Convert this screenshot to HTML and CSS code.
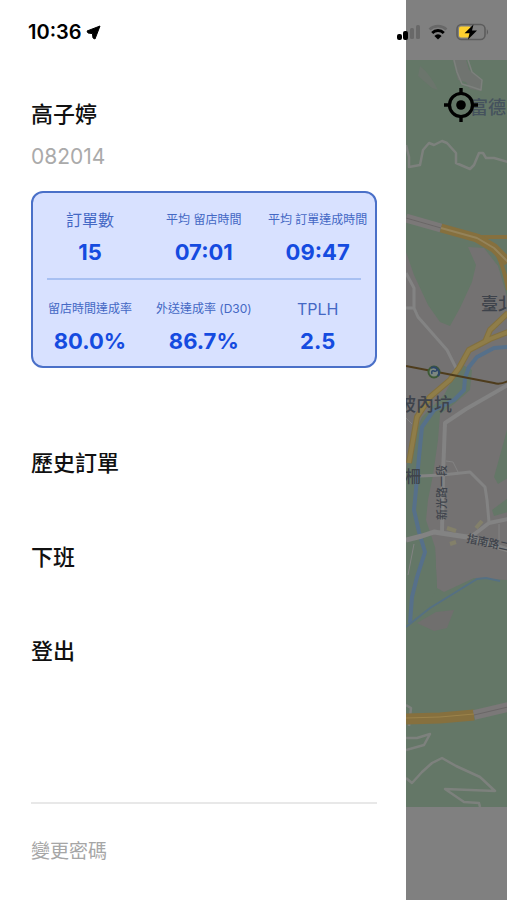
FILE: index.html
```html
<!DOCTYPE html>
<html lang="zh-Hant">
<head>
    <meta charset="UTF-8">
    <meta name="viewport" content="width=device-width, initial-scale=1.0">
    <title>外送員選單</title>
    <link rel="stylesheet" href="styles.css">
</head>
<body>
    <header class="status-bar">
        <div class="status-left">
            <span class="clock">10:36</span>
            <svg width="15" height="15" viewBox="0 0 15 15" aria-hidden="true">
                <path d="M14 1 L1 6 L2 8 L6.4 8.6 L7 13 L9 14 Z" fill="#000" stroke="#000" stroke-linejoin="round"/>
            </svg>
        </div>
        <div class="status-right">
            <!-- signal -->
            <svg width="24" height="16" viewBox="0 0 24 16" aria-hidden="true">
                <rect x="1" y="10" width="5" height="6" rx="2" fill="#000"/>
                <rect x="7" y="7" width="5" height="9" rx="2" fill="#000"/>
                <rect x="14" y="4" width="4" height="11" rx="1.5" fill="#686868"/>
                <rect x="20" y="1" width="4" height="14" rx="1.5" fill="#686868"/>
            </svg>
            <!-- wifi -->
            <svg width="20" height="16" viewBox="0 0 20 16" aria-hidden="true">
                <path d="M1.5 5.5 A12.3 12.3 0 0 1 18.5 5.5" fill="none" stroke="#686868" stroke-width="2.6"/>
                <path d="M4.2 9 A8 8 0 0 1 15.8 9" fill="none" stroke="#000" stroke-width="2.8"/>
                <path d="M10 15.4 L6.4 12 A4.8 4.8 0 0 1 13.6 12 Z" fill="#000"/>
            </svg>
            <!-- battery -->
            <svg width="34" height="18" viewBox="0 0 34 18" aria-hidden="true">
                <rect x="1" y="1.5" width="28" height="15" rx="4.5" fill="none" stroke="#5c5c5c" stroke-width="1.6"/>
                <path d="M30.8 6 Q33.4 9 30.8 12 Z" fill="#5c5c5c"/>
                <rect x="3" y="3.5" width="12" height="11" rx="2" fill="#fdd02f"/>
                <path d="M17.5 1.5 L8.5 10.2 H13.5 L12 16.5 L21 7.6 H16 Z" fill="#000"/>
            </svg>
        </div>
    </header>

    <div class="screen">
        <nav class="drawer">
            <div class="user">
                <h1 class="user-name">高子婷</h1>
                <p class="user-id">082014</p>
            </div>

            <section class="stats">
                <dl class="stats-row">
                    <div class="stat">
                        <dt class="stat-label large">訂單數</dt>
                        <dd class="stat-value">15</dd>
                    </div>
                    <div class="stat">
                        <dt class="stat-label">平均 留店時間</dt>
                        <dd class="stat-value">07:01</dd>
                    </div>
                    <div class="stat">
                        <dt class="stat-label">平均 訂單達成時間</dt>
                        <dd class="stat-value">09:47</dd>
                    </div>
                </dl>
                <hr class="stats-line">
                <dl class="stats-row">
                    <div class="stat">
                        <dt class="stat-label">留店時間達成率</dt>
                        <dd class="stat-value">80.0%</dd>
                    </div>
                    <div class="stat">
                        <dt class="stat-label">外送達成率 (D30)</dt>
                        <dd class="stat-value">86.7%</dd>
                    </div>
                    <div class="stat">
                        <dt class="stat-label large">TPLH</dt>
                        <dd class="stat-value">2.5</dd>
                    </div>
                </dl>
            </section>

            <ul class="menu">
                <li><a href="#history">歷史訂單</a></li>
                <li><a href="#off-duty">下班</a></li>
                <li><a href="#logout">登出</a></li>
            </ul>

            <div class="drawer-footer">
                <a href="#password">變更密碼</a>
            </div>
        </nav>

        <main class="map-side">
            <button type="button" class="locate" aria-label="定位">
                <svg width="36" height="36" viewBox="0 0 36 36" aria-hidden="true">
                    <circle cx="18" cy="18" r="11.5" fill="none" stroke="#000" stroke-width="3.2"/>
                    <circle cx="18" cy="18" r="4.8" fill="#000"/>
                    <path d="M18 1 V7 M18 29 V35 M1 18 H7 M29 18 H35" stroke="#000" stroke-width="3.4"/>
                </svg>
            </button>
            <svg class="map" viewBox="0 0 102 747" preserveAspectRatio="xMinYMin slice" role="img" aria-label="地圖">
                <rect width="102" height="747" fill="#647767"/>
                <!-- built-up areas -->
                <path d="M47 0 H60 L63 10 L76 20 L75 31 L64 29 L60 22 L52 20 Z" fill="#707470"/>
                <path d="M14 6 Q24 14 32 30 L26 28 L12 16 Z" fill="#6b756c"/>
                <path d="M0 192 L8 215 L22 245 L34 262 L44 266 L54 248 L66 222 L70 205 L62 187 L78 188 L92 206 L102 240 V520 L68 518 L38 532 L31 528 L29 487 L0 482 Z" fill="#747272"/>
                <path d="M11 563 L30 552 L48 550 L41 568 L28 571 Z" fill="#706f6e"/>
                <!-- parks -->
                <path d="M55 304 L66 310 L64 330 L48 344 L34 354 L32 380 L27 415 L22 440 L20 460 L29 487 L31 530 L10 560 L0 566 V410 L6 380 L16 357 L38 335 Z" fill="#647767"/>
                <path d="M102 366 L96 388 L88 417 L92 424 L102 418 Z M102 438 L86 450 L88 456 L102 452 Z" fill="#647767"/>
                <!-- river -->
                <path d="M102 287 L88 288 L71 297 L63 307 L59 318 L58 330 L48 340 L28 350 L16 367 L13 397 L9 440 L8 450 L13 472 L19 492 L11 517 L6 537 L4 563" fill="none" stroke="#56708a" stroke-width="4" stroke-linejoin="round"/>
                <path d="M0 567 L24 548 L50 532 L71 519 L80 518 L94 521" fill="none" stroke="#557083" stroke-width="2"/>
                <!-- local roads -->
                <g fill="none" stroke="#838383" stroke-width="3" stroke-linejoin="round">
                    <path d="M0 213 L8 228 L8 248 L12 257 L41 290 L51 310 M0 248 H8"/>
                    <path d="M102 325 L60 349 L39 363 L37 415 L36 472" stroke-width="4"/>
                    <path d="M14 416 L36 415 L64 412 L79 427 L81 440 L83 462"/>
                    <path d="M0 480 L16 476 L28 472 L61 477 L102 490" stroke-width="5"/>
                    <path d="M66 476 L83 463 L102 459" stroke-width="4"/>
                    <path d="M40 401 L47 402 L52 412 M8 484 L2 515 M0 358 L6 364 M93 464 V480" stroke-width="1"/>
                </g>
                <path d="M41 468 L50 471 M44 484 L50 482 M70 468 L76 461" fill="none" stroke="#83806a" stroke-width="4"/>
                <!-- trails -->
                <g fill="none" stroke="#7d817d" stroke-width="2.5" stroke-linejoin="round">
                    <path d="M48 0 L51 12 L56 24 L66 27 L75 30 L76 20 L66 12 L62 0" stroke-width="1.5"/>
                    <path d="M0 85 L3 97 L3 107 L14 105 L17 90 L23 83 L28 85 L36 81 L41 83 L50 93 L50 103 L64 109 L68 105 L73 93 L77 93 L80 98 L88 98 L102 102"/>
                    <path d="M0 645 L5 648 L3 666 M0 678 L11 678 L24 674 L18 685 L0 690"/>
                    <path d="M0 718 L6 723 L16 712 L26 703 L36 698 L50 706 L74 717 L89 731 L39 729 L58 742 L73 743 L74 747"/>
                </g>
                <!-- highways -->
                <g fill="none" stroke-linejoin="round">
                    <path d="M0 158 L35 168" stroke="#7b7878" stroke-width="9"/>
                    <path d="M0 158 L35 168" stroke="#6a6767" stroke-width="1"/>
                    <path d="M88 188 Q98 205 102 230 M70 177 L102 177" stroke="#86703e" stroke-width="4"/>
                    <path d="M35 168 L71 178 L88 188 L102 202" stroke="#86703e" stroke-width="9"/>
                    <path d="M35 168 L71 178 L88 188 L102 202" stroke="#94835a" stroke-width="2"/>
                    <path d="M102 253 L84 270 L79 282 M102 272 L84 279 L63 290 L53 308 L44 320 L24 337 L11 357 L7 380 L3 403" stroke="#82703f" stroke-width="6"/>
                    <path d="M102 253 L84 270 L79 282 M102 272 L84 279 L63 290 L53 308 L44 320 L24 337 L11 357 L7 380 L3 403" stroke="#8f7d49" stroke-width="4"/>
                    <path d="M0 659 L34 658 L68 655" stroke="#86703e" stroke-width="11"/>
                    <path d="M0 658 L34 657 L68 654" stroke="#9b834b" stroke-width="1"/>
                    <path d="M68 655 L102 647" stroke="#7b7878" stroke-width="10"/>
                    <path d="M68 655 L102 647" stroke="#6a6767" stroke-width="1"/>
                </g>
                <!-- metro line and station -->
                <path d="M0 306 L88 323 Q94 325 102 321" fill="none" stroke="#4e3c1c" stroke-width="2"/>
                <circle cx="28" cy="312" r="5.5" fill="#7c8780" stroke="#3d5a35" stroke-width="2"/>
                <path d="M25 308 A5.5 5.5 0 0 1 32 316" fill="none" stroke="#2c4668" stroke-width="2"/>
                <path d="M26 314 Q25 310 28 311 Q31 312 31 309" fill="none" stroke="#2c4668" stroke-width="1.5"/>
                <!-- place names -->
                <g class="map-text">
                    <text x="64" y="54" font-size="18" fill="#45525d">富德</text>
                    <text x="75" y="250" font-size="17">臺北</text>
                    <text x="-8" y="351" font-size="18">坡內坑</text>
                    <text x="-1" y="422" font-size="16">柵</text>
                    <text transform="translate(40 460) rotate(-90)" font-size="11">新光路一段</text>
                    <text transform="translate(60 482) rotate(12)" font-size="11">指南路二</text>
                </g>
            </svg>
        </main>
    </div>
</body>
</html>
```

FILE: styles.css
```css
* {
    box-sizing: border-box;
}
body {
    margin: 0;
    font-family: Inter, "Noto Sans CJK TC", sans-serif;
    color: #111;
    background-color: #fff;
}
a {
    color: inherit;
    text-decoration: none;
}

/* status bar lies over the drawer and the map */
.status-bar {
    position: absolute;
    top: 0;
    left: 0;
    right: 0;
    z-index: 2;
    display: flex;
    justify-content: space-between;
    align-items: center;
    height: 64px;
    padding: 0 17px 0 28px;
}
.status-left {
    display: flex;
    align-items: center;
    gap: 4px;
}
.status-right {
    display: flex;
    align-items: center;
    gap: 8px;
}
.clock {
    font-size: 20px;
    font-weight: 600;
    color: #000;
}

.screen {
    display: flex;
    min-height: 100vh;
}
.drawer {
    display: flex;
    flex-direction: column;
    width: 80%;
    padding: 98px 29px 32px 31px;
    background-color: #fff;
}
.user-name {
    margin: 0;
    font-size: 22px;
    font-weight: 500;
    line-height: 32px;
}
.user-id {
    margin: 12px 0 19px;
    font-size: 21px;
    line-height: 30px;
    color: #aaa;
}

.stats {
    padding: 15px 0 13px;
    border: 2px solid #4a70c8;
    border-radius: 12px;
    background-color: #d8e1ff;
}
.stats-row {
    display: grid;
    grid-template-columns: repeat(3, 1fr);
    margin: 0;
}
.stat {
    display: flex;
    flex-direction: column;
    align-items: center;
    gap: 8px;
}
.stat-label {
    font-size: 12px;
    line-height: 24px;
    color: #4468c4;
    white-space: nowrap;
}
.stat-label.large {
    font-size: 16px;
}
.stat-value {
    margin: 0;
    font-size: 22px;
    font-weight: 700;
    line-height: 24px;
    color: #154be0;
}
.stats-line {
    height: 2px;
    margin: 14px 14px 17px;
    border: 0;
    background-color: #a8c0f2;
}

.menu {
    display: flex;
    flex-direction: column;
    gap: 62px;
    margin: 0;
    padding: 79px 0 0;
    list-style: none;
    font-size: 22px;
    font-weight: 500;
    line-height: 32px;
}
.menu a {
    display: block;
}
.drawer-footer {
    margin-top: auto;
    padding-top: 32px;
    border-top: 2px solid #e8e8e8;
    font-size: 19px;
    line-height: 32px;
    color: #a6a6a6;
}

.map-side {
    position: relative;
    flex: 1;
    display: flex;
    min-width: 0;
    padding: 60px 0 93px;
    background-color: #808080;
}
.map {
    flex: 1;
    min-width: 0;
    height: auto;
}
.map-text {
    font-family: "Noto Sans CJK TC", sans-serif;
    font-weight: 500;
    fill: #3e434b;
}
.locate {
    position: absolute;
    top: 87px;
    left: 37px;
    display: flex;
    padding: 0;
    border: 0;
    background: none;
    cursor: pointer;
}
```
